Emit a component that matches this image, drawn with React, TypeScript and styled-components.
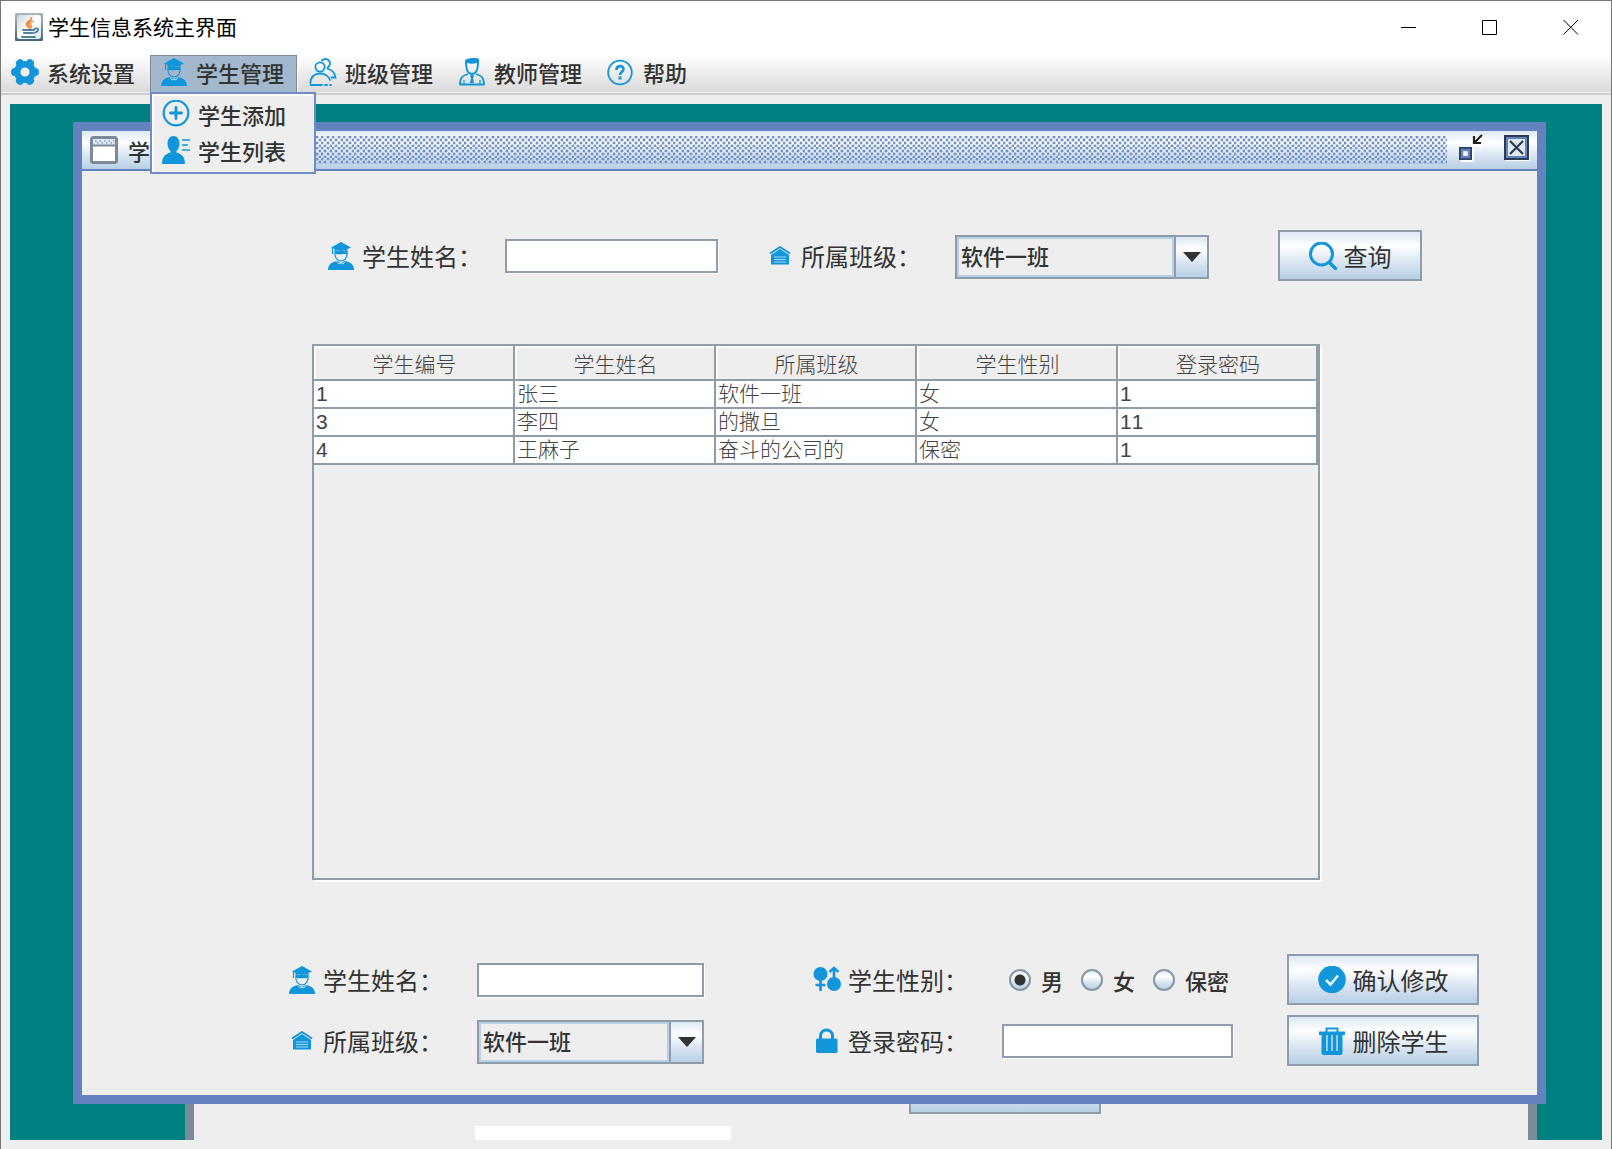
import React, { useState } from "react";
import styled, { createGlobalStyle, css } from "styled-components";

const color = {
  panel: "#eeeeee",
  ink: "#333333",
  line: "#8e9cab",
  grid: "#8f9daa",
  frame: "#6382bf",
  glow: "#b8cfe5",
  teal: "#008080",
  icon: "#1296db",
};

const sans = `"Noto Sans CJK SC", "Noto Sans", sans-serif`;
const metal = "linear-gradient(180deg, #dde8f3 0%, #ffffff 30%, #dde8f3 60%, #b8cfe5 100%)";

const GlobalStyle = createGlobalStyle`
  * { box-sizing: border-box; }
  body { margin: 0; background: ${color.panel}; color: ${color.ink}; font-family: ${sans}; }
  button, input, select { font: inherit; color: inherit; margin: 0; border-radius: 0; }
`;

/* ---------- application window ---------- */

const Shell = styled.div`
  display: flex;
  flex-direction: column;
  min-height: 100vh;
  border: 1px solid #777777;
  border-bottom: 0;
  background: ${color.panel};
`;

const TitleBar = styled.header`
  display: flex;
  align-items: center;
  height: 54px;
  padding: 0 0 2px 14px;
  background: #ffffff;
`;

const AppTitle = styled.h1`
  flex: 1;
  margin: 0 0 0 5px;
  padding-bottom: 2px;
  color: #000000;
  font-size: 21px;
  font-weight: 400;
  line-height: 28px;
`;

const CaptionButton = styled.button`
  display: flex;
  align-items: center;
  justify-content: center;
  width: 81px;
  height: 52px;
  padding: 0;
  border: 0;
  background: transparent;
`;

const MenuBar = styled.nav`
  display: flex;
  gap: 2px;
  height: 40px;
  padding-bottom: 2px;
  border-bottom: 2px solid #cccccc;
  background: linear-gradient(180deg, #ffffff 0, #dadada 37px, #eeeeee 37px);
`;

const MenuSlot = styled.div`
  position: relative;
`;

const MenuButton = styled.button<{ $open?: boolean }>`
  display: flex;
  align-items: center;
  gap: 8px;
  height: 37px;
  padding: 0 13px 3px 10px;
  border: 0;
  background: transparent;
  font-size: 22px;
  font-weight: 500;
  line-height: 32px;
  white-space: nowrap;
  ${(p) =>
    p.$open &&
    css`
      background: #a3b8cc;
      box-shadow: inset 1px 1px 0 #7a8a99, inset -1px 0 0 #7a8a99, 1px 0 0 #ffffff;
    `}
`;

const Popup = styled.div`
  position: absolute;
  top: 37px;
  left: 0;
  z-index: 10;
  width: 166px;
  padding: 2px 0 4px;
  border: 2px solid #6f8cc4;
  background: ${color.panel};
  box-shadow: inset 2px 2px 0 #ffffff;
`;

const PopupItem = styled.button`
  display: flex;
  align-items: center;
  gap: 8px;
  width: 100%;
  height: 36px;
  padding: 0 10px;
  border: 0;
  background: transparent;
  font-size: 22px;
  font-weight: 500;
  line-height: 32px;
  white-space: nowrap;
`;

/* ---------- desktop and its frames ---------- */

const Desktop = styled.main`
  position: relative;
  flex: 1;
  margin: 9px;
  padding: 18px 56px 36px 63px;
  overflow: hidden;
  background: ${color.teal};
`;

const BackFrame = styled.div`
  position: absolute;
  top: 60px;
  right: 65px;
  bottom: 0;
  left: 175px;
  display: flex;
  flex-direction: column;
  justify-content: flex-end;
  gap: 12px;
  border: solid #7a8a99;
  border-width: 9px 9px 0;
  background: ${color.panel};
`;

const BackButton = styled.button`
  width: 192px;
  height: 51px;
  margin-left: 715px;
  border: 2px solid ${color.line};
  background: ${metal};
`;

const BackField = styled.input`
  width: 256px;
  height: 14px;
  margin-left: 281px;
  border: 0;
  background: #ffffff;
`;

const Frame = styled.section`
  position: relative;
  z-index: 1;
  border: 9px solid ${color.frame};
  background: ${color.panel};
`;

const FrameBar = styled.div`
  display: flex;
  align-items: center;
  height: 40px;
  padding: 0 6px 0 8px;
  border-bottom: 2px solid ${color.frame};
  background: ${metal};
`;

const FrameTitle = styled.h2`
  width: 88px;
  margin: 0 6px 0 10px;
  font-size: 22px;
  font-weight: 500;
  line-height: 32px;
`;

const dots = [
  [1, 1], [7, 1], [4, 4], [10, 4], [1, 7], [7, 7], [4, 10], [10, 10],
]
  .map(([x, y]) => `radial-gradient(circle at ${x}px ${y}px, ${color.frame} 0, #7d98cc 1px, transparent 2px)`)
  .join(", ");

const Bumps = styled.div`
  flex: 1;
  height: 28px;
  margin-right: 9px;
  background-image: ${dots};
  background-size: 11px 11px;
`;

const FrameButton = styled.button`
  display: flex;
  padding: 0 0 4px;
  border: 0;
  background: transparent;
  & + & {
    margin-left: 19px;
  }
`;

const Content = styled.div`
  padding: 59px 58px 29px 206px;
`;

/* ---------- form parts ---------- */

const SearchRow = styled.form`
  display: grid;
  grid-template-columns: 439fr 512fr 144px;
  align-items: center;
  padding: 0 57px 0 39px;
`;

const EditGrid = styled.form`
  display: grid;
  grid-template-columns: 525fr 474fr 192px;
  align-items: center;
  row-gap: 10px;
`;

const Field = styled.div<{ $label: number }>`
  display: grid;
  grid-template-columns: ${(p) => p.$label}px auto;
  align-items: center;
  justify-content: start;
`;

const Caption = styled.label`
  display: flex;
  align-items: center;
  gap: 7px;
  font-size: 24px;
  line-height: 36px;
  white-space: nowrap;
`;

const TextInput = styled.input<{ $width: number }>`
  width: ${(p) => p.$width}px;
  height: 34px;
  padding: 0 6px;
  border: 2px solid ${color.line};
  background: #ffffff;
  box-shadow: 1px 1px 0 #ffffff;
  font-size: 22px;
`;

const SelectBox = styled.div<{ $width: number }>`
  position: relative;
  width: ${(p) => p.$width}px;
  height: 44px;
  margin-top: 2px;
`;

const Select = styled.select`
  appearance: none;
  width: 100%;
  height: 100%;
  padding: 0 38px 3px 4px;
  border: 2px solid ${color.line};
  background: ${color.panel};
  box-shadow: inset 2px 2px 0 ${color.glow}, inset 0 -2px 0 ${color.glow};
  font-size: 22px;
  font-weight: 500;
`;

const SelectArrow = styled.span`
  position: absolute;
  top: 2px;
  right: 2px;
  bottom: 2px;
  display: flex;
  align-items: center;
  justify-content: center;
  width: 33px;
  border-left: 2px solid ${color.line};
  background: ${metal};
  box-shadow: -2px 0 0 ${color.glow};
  pointer-events: none;
`;

const MetalButton = styled.button`
  display: flex;
  align-items: center;
  justify-content: center;
  gap: 7px;
  width: 100%;
  height: 51px;
  padding: 0;
  border: 2px solid ${color.line};
  background: ${metal};
  font-size: 24px;
  line-height: 36px;
  white-space: nowrap;
`;

const RadioGroup = styled.div`
  display: flex;
  gap: 18px;
  padding-left: 7px;
`;

const RadioLabel = styled.label`
  display: flex;
  align-items: center;
  gap: 10px;
  font-size: 22px;
  font-weight: 500;
  line-height: 32px;
  white-space: nowrap;
`;

const Radio = styled.input`
  appearance: none;
  width: 22px;
  height: 22px;
  border: 2px solid #8796a5;
  border-radius: 50%;
  background: ${metal};
  &:checked {
    background: radial-gradient(circle, #333333 5px, transparent 6px), ${metal};
  }
`;

/* ---------- table ---------- */

const ScrollPane = styled.div`
  min-height: 536px;
  margin: 63px 159px 74px 24px;
  border: 2px solid ${color.grid};
  box-shadow: 2px 2px 0 #ffffff;
`;

const Table = styled.table`
  width: 100%;
  table-layout: fixed;
  border-collapse: separate;
  border-spacing: 0;
  font-size: 21px;
  line-height: 26px;
  color: #444444;
`;

const Th = styled.th`
  height: 35px;
  padding: 0 0 0 2px;
  border: solid ${color.grid};
  border-width: 0 2px 2px 0;
  box-shadow: inset 2px 2px 0 #ffffff;
  font-weight: 300;
`;

const Td = styled.td`
  height: 28px;
  padding: 0 2px;
  border: solid ${color.grid};
  border-width: 0 2px 2px 0;
  background: #ffffff;
  font-family: "Liberation Sans", ${sans};
  font-weight: 300;
  font-kerning: none;
  white-space: nowrap;
`;

/* ---------- icons ---------- */

type IconProps = { children: React.ReactNode };
const Glyph = styled.svg`
  flex: none;
  width: 28px;
  height: 28px;
  fill: none;
`;
const Icon = ({ children }: IconProps) => (
  <Glyph viewBox="0 0 28 28" aria-hidden="true">
    {children}
  </Glyph>
);

const JavaIcon = () => (
  <Icon>
    <defs>
      <linearGradient id="javaTile" x1="0" y1="0" x2="0" y2="1">
        <stop offset="0" stopColor="#a9b7bf" />
        <stop offset="1" stopColor="#47657c" />
      </linearGradient>
      <linearGradient id="javaFace" x1="0" y1="0" x2="1" y2="1">
        <stop offset="0" stopColor="#cfd4d7" />
        <stop offset="0.5" stopColor="#ffffff" />
        <stop offset="1" stopColor="#dfe5ea" />
      </linearGradient>
    </defs>
    <rect width="28" height="28" rx="1" fill="url(#javaTile)" />
    <rect x="2" y="2" width="24" height="24" rx="3" fill="url(#javaFace)" />
    <path d="M16 4c1 3-5 4-5 7 0 2 2 3 3 5 1-3-1-3 0-5s4-4 2-7zM19 8c-3 1-5 3-4 5 1 1 1 2 0 3 3-2 2-3 1-4s1-3 3-4z" fill="#f08a3c" stroke="#f08a3c" strokeWidth=".8" />
    <path d="M8 17h11M9 20h9M7 24h13" stroke="#5382a1" strokeWidth="2" strokeLinecap="round" />
    <path d="M19 16c5-2 6 2 0 4" stroke="#5382a1" strokeWidth="1.800" />
  </Icon>
);

const GearIcon = () => (
  <Icon>
    <circle cx="14" cy="14" r="7.800" stroke={color.icon} strokeWidth="6.400" />
    <path
      d="M21 14h3M7 14H4M17.500 8 19 5.300M10.500 8 9 5.300M17.500 20l1.500 2.700M10.500 20 9 22.700"
      stroke={color.icon}
      strokeWidth="8"
      strokeLinecap="round"
    />
    <circle cx="14" cy="14" r="4.600" fill="#eeeeee" />
  </Icon>
);

const StudentIcon = () => (
  <Icon>
    <path d="M14 0 24 5.500l-3.500 1.500v2.500c-4-2-9-2-13 0V7L4 5.500z" fill={color.icon} />
    <path d="M5.500 6v6M8 9c-1 6 2 10 6 10s7-4 6-10" stroke={color.icon} strokeWidth="1.200" />
    <path d="M8 9.500c4-2 8-2 12 0v3c-3-1.500-6 .5-11.500-.5z" fill={color.icon} />
    <path d="M1 28c0-5 3-8 9-9l4 2 4-2c6 1 9 4 9 9z" fill={color.icon} />
    <path d="M10 19.500 12 22l2-1 2 1 2-2.500" stroke="#ffffff" strokeWidth="1" opacity=".7" />
  </Icon>
);

const ClassIcon = () => (
  <Icon>
    <g stroke={color.icon} strokeWidth="1.800" strokeLinecap="round">
      <circle cx="11" cy="9" r="4.600" />
      <path d="M13 2.500c3-3 8-1 8 3 0 2-1 3-2.500 4.500" />
      <path d="M1.500 25c0-6 4-9.500 9.500-9.500S20 19 21 22" />
      <path d="M19 11c4 1 7 4 7.500 8.500h-4" />
      <path d="M1.500 27H13M16 27h2M21 27h1" />
    </g>
  </Icon>
);

const TeacherIcon = () => (
  <Icon>
    <g stroke={color.icon} strokeWidth="1.800" strokeLinejoin="round">
      <path d="M8 4c0 8 2 12 6 12s6-4 6-12" />
      <path d="M10 16c-5 1.500-8 3-8 10.500h24c0-7.500-3-9-8-10.500" />
      <path d="M6 22v4M22 22v4" strokeWidth="1.200" />
    </g>
    <path d="M7 2c4-2 10-3 14-1v6l-2-2c-4 1-7 1-10 0L7.500 7z" fill={color.icon} />
    <path d="m14 16 2 2-1 2 1 5h-4l1-5-1-2z" fill={color.icon} />
  </Icon>
);

const HelpIcon = () => (
  <Icon>
    <circle cx="13" cy="14.500" r="11.800" stroke={color.icon} strokeWidth="1.800" />
    <path d="M9.500 12c0-5 7-5 7-1 0 3-3.500 3-3.500 6" stroke={color.icon} strokeWidth="2.600" />
    <rect x="11.500" y="18.500" width="3" height="3" fill={color.icon} />
  </Icon>
);

const AddIcon = () => (
  <Icon>
    <circle cx="14" cy="13" r="12.300" stroke={color.icon} strokeWidth="2.200" />
    <path d="M14 7.500v11M8.500 13h11" stroke={color.icon} strokeWidth="2.800" strokeLinecap="round" />
  </Icon>
);

const ListIcon = () => (
  <Icon>
    <path d="M11.500 0C15 0 17.500 3 17.500 7.500c0 3-1 5.500-3 7.500v1.500c5 1.500 8.500 4 8.500 11.500H0c0-7.500 3.500-10 8.500-11.500V15c-2-2-3-4.500-3-7.500C5.500 3 8 0 11.500 0z" fill={color.icon} />
    <path d="M20 4h8M20 9h6M20 14h8" stroke={color.icon} strokeWidth="1.600" />
  </Icon>
);

const HouseIcon = () => (
  <Icon>
    <path d="M4 11.500 14 5l10 6.500" stroke={color.icon} strokeWidth="2" strokeLinejoin="round" />
    <path d="m14 7 9 6v9.500H5V13z" fill={color.icon} />
    <path d="M8 15h12M8 17.500h12M8 20h12" stroke="#a6d6f1" strokeWidth="1.200" />
  </Icon>
);

const SearchIcon = () => (
  <Icon>
    <circle cx="12.500" cy="12" r="11" stroke={color.icon} strokeWidth="3" />
    <path d="m20.500 20.500 6 6" stroke={color.icon} strokeWidth="3.400" strokeLinecap="round" />
  </Icon>
);

const GenderIcon = () => (
  <Icon>
    <circle cx="7.500" cy="8" r="7" fill={color.icon} />
    <circle cx="21" cy="18" r="7" fill={color.icon} />
    <path d="M7.500 14v11M2.500 19h10M21 12V3M16.500 6 21 2l4.500 4" stroke={color.icon} strokeWidth="2.600" />
  </Icon>
);

const LockIcon = () => (
  <Icon>
    <path d="M7.500 13V9c0-8 12-8 12 0v4" stroke={color.icon} strokeWidth="3" />
    <rect x="3" y="11.500" width="21.500" height="14.500" rx="1.500" fill={color.icon} />
  </Icon>
);

const CheckIcon = () => (
  <Icon>
    <circle cx="14" cy="13.500" r="13.800" fill={color.icon} />
    <path d="m8 14 4.500 4.500 7.500-9" stroke="#e8f4fb" strokeWidth="2.600" />
  </Icon>
);

const TrashIcon = () => (
  <Icon>
    <path d="M8.500 5V1.500h11V5" stroke={color.icon} strokeWidth="2" />
    <path d="M1 4.500h26V8h-2.500v18a2 2 0 0 1-2 2h-17a2 2 0 0 1-2-2V8H1z" fill={color.icon} />
    <path d="M9 8v16M14 8v16M19 8v16" stroke="#a6d3ee" strokeWidth="1.800" />
  </Icon>
);

const FrameIcon = () => (
  <Icon>
    <rect x="1.500" y="1.500" width="25" height="25" rx="2" fill="#ffffff" stroke="#7a8a99" strokeWidth="3" />
    <rect x="3" y="3" width="22" height="6" fill="#dde8f3" />
    <path d="M5 5h20M7 7h18" stroke={color.frame} strokeWidth="1.200" strokeDasharray="1.500 3" />
    <path d="M3 9.500h22" stroke="#7a8a99" strokeWidth="2" />
  </Icon>
);

const RestoreIcon = () => (
  <Icon>
    <path d="M27 2 19 10M18 3v8h8" stroke="#ffffff" strokeWidth="2" />
    <path d="M26 1 19 8M18 2v7h7" stroke="#222222" strokeWidth="2.200" />
    <rect x="5" y="15" width="13" height="13" fill="#ffffff" />
    <rect x="4" y="14" width="11" height="11" fill="#ffffff" stroke="#33415f" strokeWidth="2" />
    <rect x="6" y="16" width="7" height="7" fill="#ffffff" stroke={color.frame} strokeWidth="2.400" />
  </Icon>
);

const CloseIcon = () => (
  <Icon>
    <rect x="3" y="3" width="24" height="24" fill="#ffffff" />
    <rect x="2" y="2" width="23" height="23" fill="#dde8f3" stroke="#2f3a52" strokeWidth="2" />
    <rect x="4" y="4" width="19" height="19" stroke={color.frame} strokeWidth="2" />
    <path d="m7 7 13 13M20 7 7 20" stroke="#2f3a52" strokeWidth="2.200" />
  </Icon>
);

const DownArrow = () => (
  <svg width="18" height="10" viewBox="0 0 18 10" aria-hidden="true">
    <path d="M0 0h18L9 10z" fill="#333333" />
  </svg>
);

const CaptionGlyph = ({ d }: { d: string }) => (
  <svg width="16" height="16" viewBox="0 0 16 16" fill="none" stroke="#000000" aria-hidden="true">
    <path d={d} />
  </svg>
);

/* ---------- data ---------- */

const menus = [
  { name: "系统设置", icon: <GearIcon /> },
  {
    name: "学生管理",
    icon: <StudentIcon />,
    items: [
      { name: "学生添加", icon: <AddIcon /> },
      { name: "学生列表", icon: <ListIcon /> },
    ],
  },
  { name: "班级管理", icon: <ClassIcon /> },
  { name: "教师管理", icon: <TeacherIcon /> },
  { name: "帮助", icon: <HelpIcon /> },
];

const columns = ["学生编号", "学生姓名", "所属班级", "学生性别", "登录密码"];
const students = [
  ["1", "张三", "软件一班", "女", "1"],
  ["3", "李四", "的撒旦", "女", "11"],
  ["4", "王麻子", "奋斗的公司的", "保密", "1"],
];
const classes = ["软件一班", "的撒旦", "奋斗的公司的"];

const ClassSelect = ({ id, width }: { id: string; width: number }) => (
  <SelectBox $width={width}>
    <Select id={id} defaultValue={classes[0]}>
      {classes.map((c) => (
        <option key={c}>{c}</option>
      ))}
    </Select>
    <SelectArrow>
      <DownArrow />
    </SelectArrow>
  </SelectBox>
);

export default function App() {
  const [openMenu, setOpenMenu] = useState("学生管理");
  const [gender, setGender] = useState("男");
  const stop = (e: React.FormEvent) => e.preventDefault();

  return (
    <Shell>
      <GlobalStyle />
      <TitleBar>
        <JavaIcon />
        <AppTitle>学生信息系统主界面</AppTitle>
        <CaptionButton type="button" aria-label="最小化">
          <CaptionGlyph d="M0 8.500h15" />
        </CaptionButton>
        <CaptionButton type="button" aria-label="最大化">
          <CaptionGlyph d="M.5 1.500h14v14H.5z" />
        </CaptionButton>
        <CaptionButton type="button" aria-label="关闭">
          <CaptionGlyph d="m.5 1 14.500 14.500M15 1 .5 15.500" />
        </CaptionButton>
      </TitleBar>

      <MenuBar>
        {menus.map((m) => (
          <MenuSlot key={m.name}>
            <MenuButton
              type="button"
              $open={openMenu === m.name}
              aria-expanded={openMenu === m.name}
              onClick={() => setOpenMenu(openMenu === m.name ? "" : m.name)}
            >
              {m.icon}
              {m.name}
            </MenuButton>
            {m.items && openMenu === m.name && (
              <Popup>
                {m.items.map((item) => (
                  <PopupItem type="button" key={item.name}>
                    {item.icon}
                    {item.name}
                  </PopupItem>
                ))}
              </Popup>
            )}
          </MenuSlot>
        ))}
      </MenuBar>

      <Desktop>
        <BackFrame aria-hidden="true">
          <BackButton type="button" tabIndex={-1} />
          <BackField tabIndex={-1} readOnly />
        </BackFrame>

        <Frame>
          <FrameBar>
            <FrameIcon />
            <FrameTitle>学</FrameTitle>
            <Bumps />
            <FrameButton type="button" aria-label="还原">
              <RestoreIcon />
            </FrameButton>
            <FrameButton type="button" aria-label="关闭窗口">
              <CloseIcon />
            </FrameButton>
          </FrameBar>

          <Content>
            <SearchRow onSubmit={stop}>
              <Field $label={178}>
                <Caption htmlFor="searchName">
                  <StudentIcon />
                  学生姓名：
                </Caption>
                <TextInput id="searchName" $width={213} />
              </Field>
              <Field $label={189}>
                <Caption htmlFor="searchClass">
                  <HouseIcon />
                  所属班级：
                </Caption>
                <ClassSelect id="searchClass" width={254} />
              </Field>
              <MetalButton type="submit">
                <SearchIcon />
                查询
              </MetalButton>
            </SearchRow>

            <ScrollPane>
              <Table>
                <colgroup>
                  {columns.slice(1).map((c) => (
                    <col key={c} width="201" />
                  ))}
                  <col />
                </colgroup>
                <thead>
                  <tr>
                    {columns.map((c) => (
                      <Th key={c} scope="col">{c}</Th>
                    ))}
                  </tr>
                </thead>
                <tbody>
                  {students.map((row) => (
                    <tr key={row[0]}>
                      {row.map((cell, i) => (
                        <Td key={columns[i]}>{cell}</Td>
                      ))}
                    </tr>
                  ))}
                </tbody>
              </Table>
            </ScrollPane>

            <EditGrid onSubmit={stop}>
              <Field $label={189}>
                <Caption htmlFor="editName">
                  <StudentIcon />
                  学生姓名：
                </Caption>
                <TextInput id="editName" $width={227} />
              </Field>
              <Field $label={189}>
                <Caption as="span" id="genderLabel">
                  <GenderIcon />
                  学生性别：
                </Caption>
                <RadioGroup role="radiogroup" aria-labelledby="genderLabel">
                  {["男", "女", "保密"].map((g) => (
                    <RadioLabel key={g}>
                      <Radio type="radio" name="gender" checked={gender === g} onChange={() => setGender(g)} />
                      {g}
                    </RadioLabel>
                  ))}
                </RadioGroup>
              </Field>
              <MetalButton type="submit">
                <CheckIcon />
                确认修改
              </MetalButton>
              <Field $label={189}>
                <Caption htmlFor="editClass">
                  <HouseIcon />
                  所属班级：
                </Caption>
                <ClassSelect id="editClass" width={227} />
              </Field>
              <Field $label={189}>
                <Caption htmlFor="editPassword">
                  <LockIcon />
                  登录密码：
                </Caption>
                <TextInput id="editPassword" type="password" $width={231} />
              </Field>
              <MetalButton type="button">
                <TrashIcon />
                删除学生
              </MetalButton>
            </EditGrid>
          </Content>
        </Frame>
      </Desktop>
    </Shell>
  );
}
